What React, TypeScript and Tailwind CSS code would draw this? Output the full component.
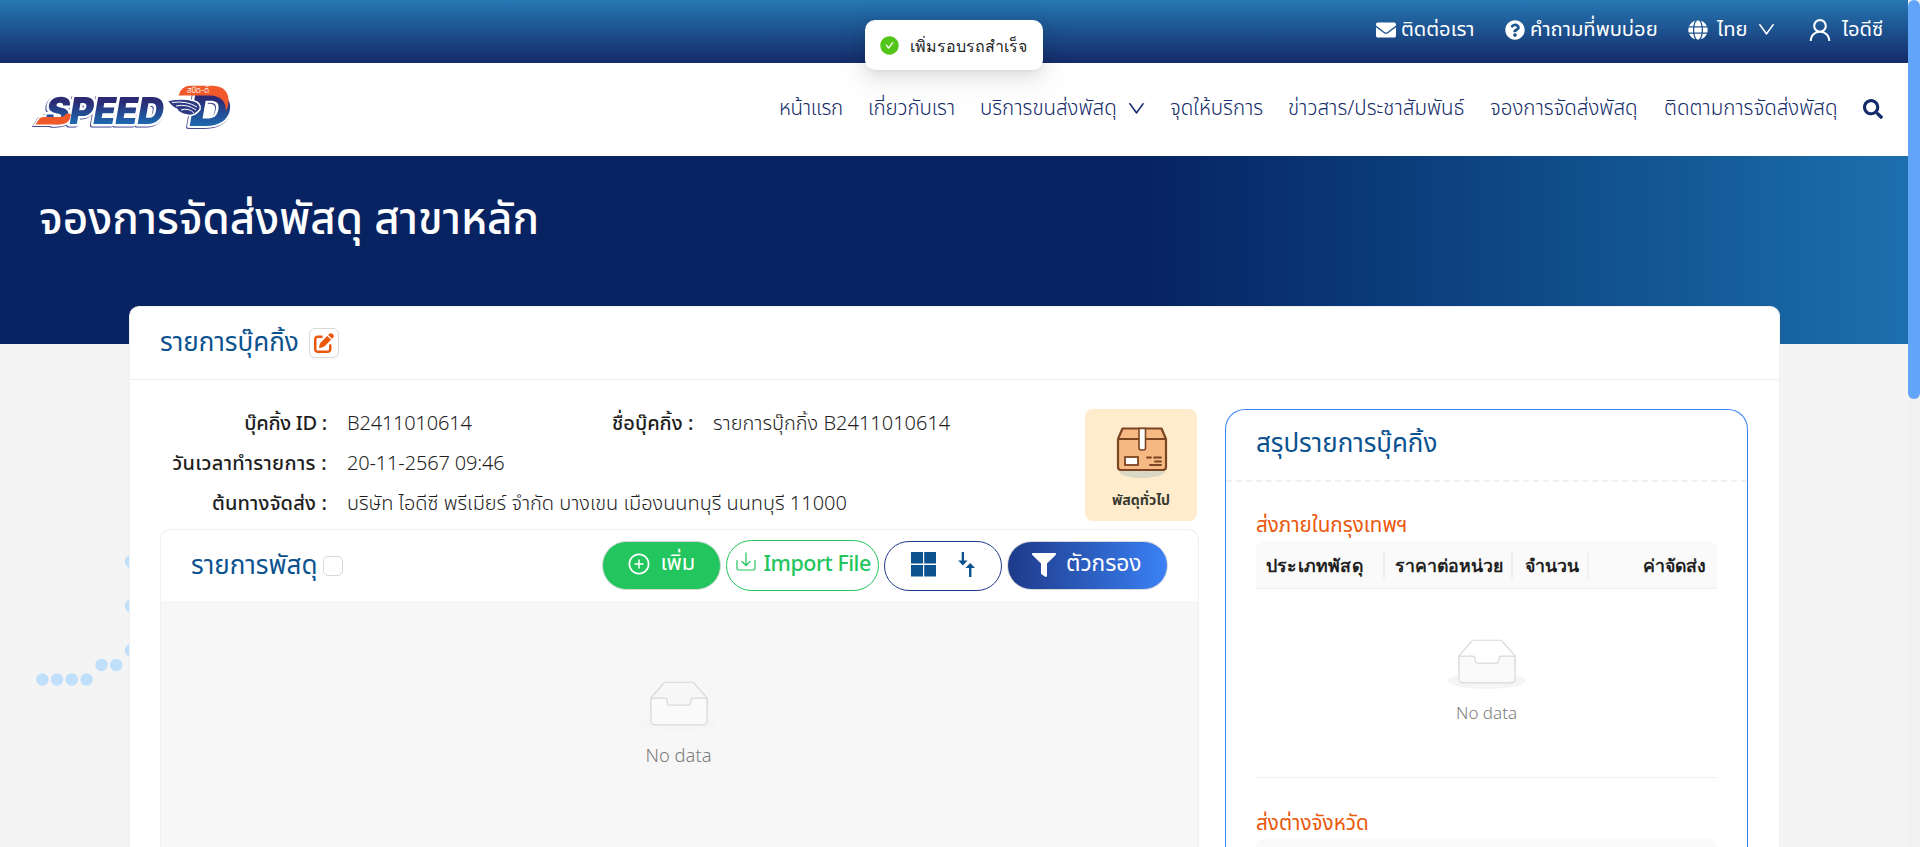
import type { ReactNode } from "react";
import { FaEnvelope, FaQuestionCircle, FaGlobe, FaSearch, FaFilter } from "react-icons/fa";
import { FaPenToSquare } from "react-icons/fa6";
import { AiOutlineUser, AiOutlineDown, AiOutlinePlusCircle, AiFillCheckCircle } from "react-icons/ai";

function T({ className, children }: { className: string; children: ReactNode }) {
  return <span className={`block shrink-0 whitespace-nowrap ${className}`}>{children}</span>;
}

function Logo() {
  return (
    <svg width="206" height="50" viewBox="0 0 206 50" className="block overflow-visible">
      <defs>
        <linearGradient id="navy" x1="0" y1="0" x2="0" y2="1">
          <stop offset="0.3" stopColor="#2b2a73" />
          <stop offset="0.85" stopColor="#1e6fb5" />
        </linearGradient>
      </defs>
      <g className="[filter:drop-shadow(-1px_1.5px_0_#4a4d92)]" fontFamily="Inter, sans-serif" fontWeight="900">
        <path d="M9.500 39 L13 33.500 Q14 32 18 32 H37 L44 28 Q44 39 33 39 Z" fill="#fff" stroke="#fff" strokeWidth="4" />
        <text transform="translate(17 38.500) skewX(-10)" fontSize="37" textLength="118" lengthAdjust="spacingAndGlyphs" fill="url(#navy)" stroke="#fff" strokeWidth="5" strokeLinejoin="round" paintOrder="stroke">SPEED</text>
        <text transform="translate(160 40.500) skewX(-10)" fontSize="45" textLength="42" lengthAdjust="spacingAndGlyphs" fill="url(#navy)" stroke="#fff" strokeWidth="4" strokeLinejoin="round" paintOrder="stroke">D</text>
      </g>
      <path d="M8.500 39.500 L12.500 33.500 Q13.500 32 17 32 H32 Q37 32 39.500 28.500 L44 29 Q43 39.500 33 39.500 Z" fill="#f1592a" />
      <path d="M151.500 10.500 Q154 .8 164 .8 H186 Q201.500 1.500 201.500 16 Q201.500 22 199 26 Q199 11 183 10.500 Z" fill="#f1592a" />
      <text x="160" y="8.300" fontFamily="Kanit, sans-serif" fontSize="8.500" fill="#fff" textLength="22" lengthAdjust="spacingAndGlyphs">สปีด-ดี</text>
      <path d="M140.500 15.500 Q156 12.500 166 15.500 Q174.500 17.500 173 24.500 Q167 32 160 30 Q152 28.500 150 24.500 Q143 21 140.500 15.500 Z" fill="#2f3a85" stroke="#fff" strokeWidth="1.500" />
      <path d="M145 17.500 Q160 15.500 170 22 M149 21 Q160 18.500 169 25 M154 25 Q162 22.500 167 28" fill="none" stroke="#fff" strokeWidth="1" />
    </svg>
  );
}

function Empty() {
  return (
    <svg width="78" height="50" viewBox="0 0 64 41" className="block">
      <g transform="translate(0 1)" fill="none" fillRule="evenodd">
        <ellipse fill="#f5f5f5" cx="32" cy="33" rx="32" ry="7" />
        <g fillRule="nonzero" stroke="#d9d9d9">
          <path d="M55 12.76L44.854 1.258C44.367.474 43.656 0 42.907 0H21.093c-.749 0-1.46.474-1.947 1.257L9 12.761V22h46v-9.24z" />
          <path d="M41.613 15.931c0-1.605.994-2.93 2.227-2.931H55v18.137C55 33.26 53.68 35 52.05 35h-40.1C10.32 35 9 33.259 9 31.137V13h11.16c1.233 0 2.227 1.323 2.227 2.928v.022c0 1.605 1.005 2.901 2.237 2.901h14.752c1.232 0 2.237-1.308 2.237-2.913v-.007z" fill="#fafafa" />
        </g>
      </g>
    </svg>
  );
}

function Parcel() {
  return (
    <svg width="54" height="54" viewBox="0 0 54 54" className="ml-[2px] block">
      <ellipse cx="27" cy="45" rx="23" ry="7" fill="#d9d8c4" />
      <path d="M7.500 2.500 H46.500 L51 13 V41 Q51 44 48 44 H6 Q3 44 3 41 V13 Z" fill="#f6b983" stroke="#7a4520" strokeWidth="2.200" strokeLinejoin="round" />
      <path d="M3 13 H51" stroke="#7a4520" strokeWidth="2" />
      <path d="M24 2.500 H30.500 V22 Q30.500 24 28.500 24 H26 Q24 24 24 22 Z" fill="#fff" stroke="#7a4520" strokeWidth="1.600" />
      <rect x="10" y="31" width="13" height="8" fill="#fff" stroke="#7a4520" strokeWidth="1.800" />
      <path d="M32 31.500 H36 M39 31.500 H46 M40 35.500 H46 M35 39 H46" stroke="#7a4520" strokeWidth="1.800" strokeLinecap="round" />
    </svg>
  );
}

function ImportIcon() {
  return (
    <svg width="20" height="20" viewBox="0 0 20 20" fill="none" stroke="currentColor" strokeWidth="1.200" className="mb-[7px] block" strokeLinejoin="round" strokeLinecap="round">
      <path d="M1 8.500 V16.500 Q1 18 2.500 18 H17.500 Q19 18 19 16.500 V8.500" />
      <path d="M10 .8 V13 M6 9.500 L10 13.500 L14 9.500" />
    </svg>
  );
}

function GridIcon() {
  return (
    <svg width="25" height="25" viewBox="0 0 25 25" fill="#0b528f" className="block">
      <path d="M0 0h12v11.500H0zM13.200 0H25v11.500H13.200zM0 13h12v11.500H0zM13.200 13H25v11.500H13.200z" />
    </svg>
  );
}

function SortIcon() {
  return (
    <svg width="17" height="25" viewBox="0 0 17 25" fill="#0b528f" className="block">
      <path d="M3.700 0h2.300v8.500h3.500L4.900 13.500.2 8.500h3.500zM11 25h2.400v-9H17l-4.800-5L7.500 16H11z" />
    </svg>
  );
}

function Label({ children, className }: { children: ReactNode; className: string }) {
  return <T className={`w-[167px] text-right font-medium ${className}`}>{children}</T>;
}

function TableHead() {
  return (
    <div className="flex h-[48px] shrink-0 items-center rounded-t-[8px] border-b border-[#f0f0f0] bg-[#fafafa] pt-px font-['Noto_Sans',sans-serif] text-[17.700px] font-semibold text-[#1f1f1f]">
      <div className="flex h-[28px] w-[129px] items-center border-r-2 border-[#f0f0f0] pl-[10px]"><T className="w-[97px] tracking-[0.200px]">ประเภทพัสดุ</T></div>
      <div className="flex h-[28px] w-[128px] items-center border-r-2 border-[#f0f0f0] pl-[10px]"><T className="w-[108px]">ราคาต่อหน่วย</T></div>
      <div className="flex h-[28px] w-[76px] items-center border-r-2 border-[#f0f0f0] pl-[12px]"><T className="w-[52px]">จำนวน</T></div>
      <div className="flex flex-1 justify-end pr-[10px]"><T className="w-[64px]">ค่าจัดส่ง</T></div>
    </div>
  );
}

export default function App() {
  return (
    <div className="relative flex h-[847px] w-[1920px] overflow-hidden bg-[#f4f4f4] font-['Noto_Sans_Thai','Noto_Sans',sans-serif]">
      <div className="flex w-[1908px] shrink-0 flex-col">
        <div className="flex h-[63px] shrink-0 items-center justify-end bg-linear-to-b from-[#2678b3] to-[#142b69] pr-[24px] pb-[4px] text-[20.200px] text-white">
          <FaEnvelope className="mr-[5px] size-[20px]" />
          <T className="mr-[31px] w-[73px] pt-[2px]">ติดต่อเรา</T>
          <FaQuestionCircle className="mr-[5px] size-[20px]" />
          <T className="mr-[30px] w-[128px] pt-[2px]">คำถามที่พบบ่อย</T>
          <FaGlobe className="mr-[9px] size-[20px]" />
          <T className="mr-[9px] w-[30px] pt-[2px]">ไทย</T>
          <AiOutlineDown className="mr-[29px] size-[21px]" />
          <AiOutlineUser className="mr-[8px] size-[28px]" />
          <T className="w-[42px] pt-[2px]">ไอดีซี</T>
        </div>
        <div className="flex h-[93px] shrink-0 items-center bg-white pr-[25px] pl-[27px] text-[20.500px] font-[350] text-[#142b69]">
          <Logo />
          <div className="flex flex-1 items-center justify-end pb-[2px]">
            <T className="mr-[26px] w-[63px] pt-[2px] tracking-[-0.300px]">หน้าแรก</T>
            <T className="mr-[27px] w-[85px] pt-[2px] tracking-[-0.100px]">เกี่ยวกับเรา</T>
            <T className="mr-[11px] w-[135px] pt-[2px]">บริการขนส่งพัสดุ</T>
            <AiOutlineDown className="mr-[23px] size-[21px]" />
            <T className="mr-[25px] w-[93px] pt-[2px]">จุดให้บริการ</T>
            <T className="mr-[24px] w-[178px] pt-[2px]">ข่าวสาร/ประชาสัมพันธ์</T>
            <T className="mr-[26px] w-[148px] pt-[2px]">จองการจัดส่งพัสดุ</T>
            <T className="mr-[27px] w-[172px] pt-[2px]">ติดตามการจัดส่งพัสดุ</T>
            <FaSearch className="size-[20px]" />
          </div>
        </div>
        <div className="h-[188px] shrink-0 bg-linear-to-r from-[#072362] from-60% to-[#1c70ad] pt-[29px] pl-[39px] text-[43.900px] leading-[72px] font-medium text-white">
          <T className="w-[497px]">จองการจัดส่งพัสดุ สาขาหลัก</T>
        </div>
        <div className="z-10 mt-[-38px] ml-[129px] flex h-[541px] w-[1651px] shrink-0 flex-col rounded-t-[10px] border border-b-0 border-[#f0f0f0] bg-white">
          <div className="flex h-[73px] shrink-0 items-center border-b border-[#f0f0f0] pl-[30px]">
            <T className="mr-[11px] w-[138px] pt-px text-[26px] text-[#0b528f]">รายการบุ๊คกิ้ง</T>
            <div className="mb-px flex size-[30px] items-center justify-center rounded-[6px] border border-[#d9d9d9] bg-white shadow-[0_2px_0_rgba(0,0,0,0.02)]">
              <FaPenToSquare className="size-[20px] text-[#ea580c]" />
            </div>
          </div>
          <div className="flex flex-1 justify-between pt-[29px] pr-[31px] pl-[30px] text-[#1f1f1f]">
            <div className="flex w-[1039px] flex-col">
              <div className="flex h-[120px] justify-between">
                <div className="-mt-[5px] flex flex-col text-[20px] leading-[40px]">
                  <div className="flex h-[40px]">
                    <Label className="tracking-[-0.300px]">บุ๊คกิ้ง ID :</Label>
                    <T className="ml-[20px] w-[265px] font-[350] tracking-[-0.200px]">B2411010614</T>
                    <T className="w-[81px] font-medium">ชื่อบุ๊คกิ้ง :</T>
                    <T className="ml-[20px] w-[239px] font-[350]">รายการบุ๊กกิ้ง B2411010614</T>
                  </div>
                  <div className="flex h-[40px]">
                    <Label className="tracking-[0.300px]">วันเวลาทำรายการ :</Label>
                    <T className="ml-[20px] w-[158px] font-[350] tracking-[-0.150px]">20-11-2567 09:46</T>
                  </div>
                  <div className="flex h-[40px]">
                    <Label className="tracking-[0.150px]">ต้นทางจัดส่ง :</Label>
                    <T className="ml-[20px] w-[502px] font-[350]">บริษัท ไอดีซี พรีเมียร์ จำกัด บางเขน เมืองนนทบุรี นนทบุรี 11000</T>
                  </div>
                </div>
                <div className="mr-[2px] flex h-[112px] w-[112px] flex-col items-center rounded-[8px] bg-[#feeccd] pt-[17px]">
                  <Parcel />
                  <T className="mt-[9px] w-[58px] text-[14.200px] leading-[24px] font-bold text-[#3a3a30]">พัสดุทั่วไป</T>
                </div>
              </div>
              <div className="flex flex-1 flex-col rounded-t-[10px] border border-b-0 border-[#f0f0f0] bg-[#f7f7f7]">
                <div className="flex h-[71px] shrink-0 items-center rounded-t-[10px] bg-white pr-[30px] pl-[30px]">
                  <T className="mr-[6px] w-[126px] pt-px text-[26px] text-[#0b528f]">รายการพัสดุ</T>
                  <span className="size-[20px] rounded-[5px] border border-[#d9d9d9] bg-white" />
                  <div className="ml-auto flex items-center text-[22px]">
                    <div className="mr-[5px] flex h-[49px] w-[119px] items-center justify-center gap-[10px] rounded-full border border-[#d9d9d9] bg-[#22c55e] pr-[2px] pb-[4px] text-white">
                      <AiOutlinePlusCircle className="size-[24px]" />
                      <T className="w-[34px]">เพิ่ม</T>
                    </div>
                    <div className="mr-[5px] flex h-[51px] w-[153px] items-center justify-center gap-[8px] rounded-full border border-[#22c55e] text-[#22c55e]">
                      <ImportIcon />
                      <T className="w-[106px] text-[21.500px] font-medium tracking-[-0.500px]">Import File</T>
                    </div>
                    <div className="mr-[5px] flex h-[50px] w-[118px] items-center justify-center gap-[22px] rounded-full border border-[#1e3a8a] pb-[2px]">
                      <GridIcon />
                      <SortIcon />
                    </div>
                    <div className="flex h-[49px] w-[161px] items-center justify-center gap-[10px] rounded-full border border-[#d9d9d9] bg-linear-to-r from-[#1e3a8a] to-[#3b82f6] pr-px pb-[2px] text-white">
                      <FaFilter className="size-[24px]" />
                      <T className="w-[76px] text-[22.700px]">ตัวกรอง</T>
                    </div>
                  </div>
                </div>
                <div className="flex flex-col items-center pt-[80px] pr-[2px] text-[18.400px] font-light text-[#7c7c7c]">
                  <Empty />
                  <T className="mt-[12px] w-[66px]">No data</T>
                </div>
              </div>
            </div>
            <div className="flex w-[523px] flex-col rounded-t-[20px] border border-b-0 border-[#3b82f6]">
              <div className="flex h-[72px] shrink-0 items-center border-b-2 border-dashed border-[#f0f0f0] pl-[30px]">
                <T className="w-[181px] text-[25.900px] text-[#0b528f]">สรุปรายการบุ๊คกิ้ง</T>
              </div>
              <div className="flex flex-1 flex-col px-[30px] pt-[28px]">
                <T className="w-[151px] text-[20.600px] leading-[31px] text-[#ea580c]">ส่งภายในกรุงเทพฯ</T>
                <TableHead />
                <div className="flex h-[189px] shrink-0 flex-col items-center border-b border-[#f0f0f0] pt-[50px] text-[17px] font-light text-[#7c7c7c]">
                  <Empty />
                  <T className="mt-[13px] w-[61px]">No data</T>
                </div>
                <T className="mt-[30px] w-[113px] text-[20.700px] leading-[31px] text-[#ea580c]">ส่งต่างจังหวัด</T>
                <div className="h-[9px] rounded-t-[8px] bg-[#fafafa]" />
              </div>
            </div>
          </div>
        </div>
      </div>
      <div className="z-20 w-[12px] bg-[#f1f1f1]">
        <div className="h-[399px] rounded-full bg-[#60a5fa]" />
      </div>
      <svg width="130" height="140" viewBox="0 0 130 140" fill="#bfdffa" className="absolute top-[555px] left-0">
        <circle cx="42.300" cy="124.500" r="6.200" />
        <circle cx="57" cy="124.500" r="6.200" />
        <circle cx="71.800" cy="124.500" r="6.200" />
        <circle cx="86.600" cy="124.500" r="6.200" />
        <circle cx="101.500" cy="110" r="6.200" />
        <circle cx="116.200" cy="110" r="6.200" />
        <circle cx="131" cy="6.500" r="6.200" />
        <circle cx="131" cy="51" r="6.200" />
        <circle cx="131" cy="95.500" r="6.200" />
      </svg>
      <div className="absolute top-[20px] left-[865px] z-30 flex h-[50px] w-[178px] items-center rounded-[10px] bg-white pl-[14px] font-['Noto_Sans',sans-serif] text-[16px] text-[#1f1f1f] shadow-[0_6px_16px_0_rgba(0,0,0,0.08),0_3px_6px_-4px_rgba(0,0,0,0.12),0_9px_28px_8px_rgba(0,0,0,0.05)]">
        <AiFillCheckCircle className="mr-[10px] size-[21px] text-[#52c41a]" />
        <T className="w-[117px] pt-px">เพิ่มรอบรถสำเร็จ</T>
      </div>
    </div>
  );
}
